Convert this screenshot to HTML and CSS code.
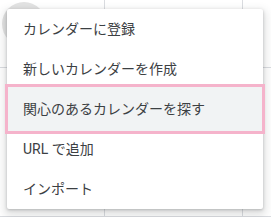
FILE: index.html
```html
<!DOCTYPE html>
<html lang="ja">

<head>
    <meta charset="UTF-8">
    <meta name="viewport" content="width=device-width, initial-scale=1.0">
    <title>カレンダーを追加</title>

    <link rel="stylesheet" href="styles.css">
</head>

<body>
    <div class="page">
        <div class="grid">
            <div class="cell"><span class="avatar"></span></div>
            <div class="cell"></div>
            <div class="cell last"></div>
            <div class="cell"></div>
            <div class="cell"></div>
            <div class="cell last"></div>
        </div>

        <ul class="menu">
            <li>カレンダーに登録</li>
            <li>新しいカレンダーを作成</li>
            <li class="active">関心のあるカレンダーを探す</li>
            <li>URL で追加</li>
            <li>インポート</li>
        </ul>
    </div>
</body>

</html>
```

FILE: styles.css
```css
* {
    margin: 0;
    padding: 0;
    list-style: none;
    box-sizing: border-box;
}

body {
    background: #fff;
    font-family: Roboto, "Noto Sans CJK JP", sans-serif;
}

.page {
    position: relative;
    width: 271px;
    height: 217px;
    overflow: hidden;
}

.grid {
    display: grid;
    grid-template-columns: 105px 138px 1fr;
    grid-template-rows: 68px 1fr;
    height: 217px;
}

.grid .cell {
    border-right: 1px solid #dadce0;
    border-bottom: 1px solid #dadce0;
}

.grid .cell.last {
    border-right: none;
}

.avatar {
    display: block;
    width: 44px;
    height: 44px;
    margin: 2px 0 0 2px;
    border-radius: 50%;
    background: #e3e3e3;
}

.menu {
    position: absolute;
    left: 7px;
    top: 9px;
    width: 256px;
    background: #fff;
    border-radius: 2px;
    box-shadow: 0 1px 3px rgba(60, 64, 67, .3), 0 4px 8px 3px rgba(60, 64, 67, .15);
}

.menu li {
    height: 40px;
    line-height: 40px;
    padding-left: 16px;
    font-size: 14px;
    color: #3c4043;
    white-space: nowrap;
}

.menu li.active {
    height: 44px;
    line-height: 44px;
    margin: -2px 1px;
    padding-left: 15px;
    background: #f1f3f4;
    box-shadow: 0 0 0 3px #f5b3cb;
}
```
